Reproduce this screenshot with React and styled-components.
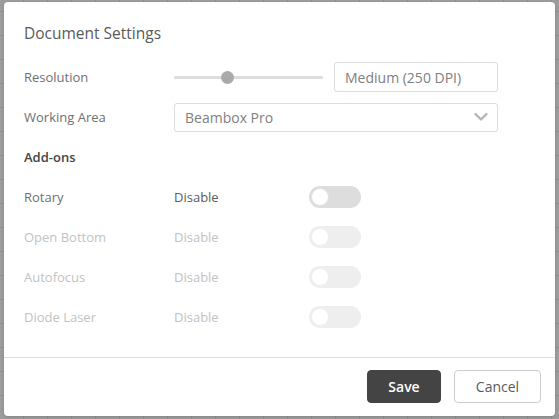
import React from 'react'
import styled, { createGlobalStyle } from 'styled-components'

const GlobalStyle = createGlobalStyle`
  html, body {
    margin: 0;
    padding: 0;
  }
  body {
    width: 559px;
    height: 419px;
    overflow: hidden;
    font-family: "Open Sans", "Liberation Sans", sans-serif;
    background-color: #9c9c9c;
    background-image:
      repeating-linear-gradient(90deg, transparent 0 23px, #8f8f8f 23px 24px),
      repeating-linear-gradient(0deg, transparent 0 23px, #8f8f8f 23px 24px);
  }
`

const Overlay = styled.div`
  box-sizing: border-box;
  width: 559px;
  height: 419px;
  padding: 2px 4px 3px 4px;
  display: flex;
`

const Modal = styled.div`
  flex: 1;
  background: #fff;
  border-radius: 4px;
  display: flex;
  flex-direction: column;
  box-shadow: 0 1px 3px rgba(0, 0, 0, 0.15);
`

const Title = styled.h2`
  margin: 0;
  padding: 21px 20px 14px;
  font-size: 15.5px;
  line-height: 20px;
  font-weight: 400;
  color: #5a5a5a;
`

const Body = styled.div`
  padding: 0 20px 20px;
  border-bottom: 1px solid #ddd;
`

const Row = styled.div`
  height: 40px;
  display: flex;
  align-items: center;
  font-size: 13px;
  color: ${p => (p.$disabled ? '#c2c2c2' : '#707070')};
`

const Label = styled.div`
  width: 150px;
  flex: none;
`

const Heading = styled.div`
  font-size: 13px;
  font-weight: 600;
  color: #444;
`

const Slider = styled.div`
  position: relative;
  width: 149px;
  height: 3px;
  background: #ddd;
  border-radius: 2px;
  margin-right: 11px;
`

const Thumb = styled.span`
  position: absolute;
  top: 50%;
  left: ${p => p.$pos}px;
  width: 13px;
  height: 13px;
  margin: -6.5px 0 0 -6.5px;
  border-radius: 50%;
  background: #aaa;
`

const TextBox = styled.div`
  box-sizing: border-box;
  width: ${p => p.$width}px;
  height: ${p => p.$height}px;
  border: 1px solid #ddd;
  border-radius: 3px;
  padding: 0 8px 0 10px;
  display: flex;
  align-items: center;
  justify-content: space-between;
  font-size: 14px;
  color: #808080;
`

const Value = styled.div`
  width: 135px;
  flex: none;
  color: ${p => (p.$disabled ? '#c2c2c2' : '#5a5a5a')};
`

const Toggle = styled.div`
  box-sizing: border-box;
  width: 52px;
  height: 22px;
  border-radius: 11px;
  background: ${p => (p.$disabled ? '#eeeeee' : '#dddddd')};
  padding: 2px;
  display: flex;
`

const Knob = styled.span`
  box-sizing: border-box;
  width: 18px;
  height: 18px;
  border-radius: 50%;
  background: #fff;
  border: 1px solid ${p => (p.$disabled ? '#f0f0f0' : '#e2e2e2')};
`

const Footer = styled.div`
  display: flex;
  justify-content: flex-end;
  gap: 13px;
  padding: 12px 14px 12px 0;
`

const Button = styled.button`
  box-sizing: border-box;
  width: ${p => p.$width}px;
  height: 33px;
  border-radius: 4px;
  font-family: inherit;
  font-size: 14px;
  border: 1px solid ${p => (p.$primary ? '#444' : '#ccc')};
  background: ${p => (p.$primary ? '#444' : '#fff')};
  color: ${p => (p.$primary ? '#fff' : '#5a5a5a')};
  font-weight: ${p => (p.$primary ? 600 : 400)};
  padding: 0;
`

const Chevron = () => (
  <svg width="16" height="10" viewBox="0 0 16 10">
    <polyline points="2.5,2 8,7.5 13.5,2" fill="none" stroke="#b5b5b5" strokeWidth="2.4" strokeLinecap="round" strokeLinejoin="round" />
  </svg>
)

const addons = [
  { name: 'Rotary', disabled: false },
  { name: 'Open Bottom', disabled: true },
  { name: 'Autofocus', disabled: true },
  { name: 'Diode Laser', disabled: true },
]

export default function App() {
  return (
    <>
      <GlobalStyle />
      <Overlay>
        <Modal>
          <Title>Document Settings</Title>
          <Body>
            <Row>
              <Label>Resolution</Label>
              <Slider>
                <Thumb $pos={53} />
              </Slider>
              <TextBox $width={164} $height={30}>Medium (250 DPI)</TextBox>
            </Row>
            <Row>
              <Label>Working Area</Label>
              <TextBox $width={324} $height={29}>
                Beambox Pro
                <Chevron />
              </TextBox>
            </Row>
            <Row>
              <Heading>Add-ons</Heading>
            </Row>
            {addons.map(a => (
              <Row key={a.name} $disabled={a.disabled}>
                <Label>{a.name}</Label>
                <Value $disabled={a.disabled}>Disable</Value>
                <Toggle $disabled={a.disabled}>
                  <Knob $disabled={a.disabled} />
                </Toggle>
              </Row>
            ))}
          </Body>
          <Footer>
            <Button $primary $width={74}>Save</Button>
            <Button $width={87}>Cancel</Button>
          </Footer>
        </Modal>
      </Overlay>
    </>
  )
}
